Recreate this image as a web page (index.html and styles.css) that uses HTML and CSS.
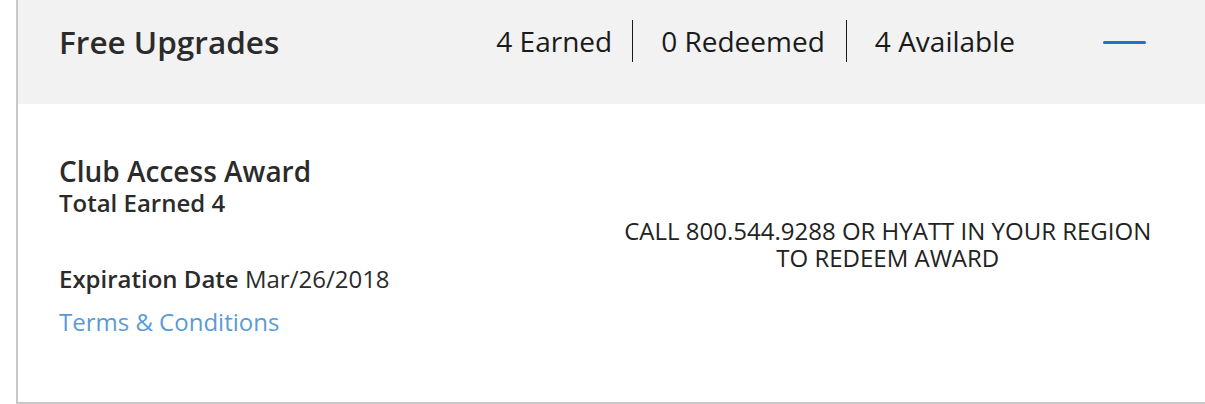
FILE: index.html
```html
<!DOCTYPE html>
<html lang="en">
<head>
    <meta charset="UTF-8">
    <meta name="viewport" content="width=device-width, initial-scale=1.0">
    <title>Free Upgrades</title>
    <link rel="stylesheet" href="styles.css">
</head>
<body>

    <!-- Блок бесплатных апгрейдов -->
    <div class="upgrades">
        <div class="upgrades-header">
            <h2 class="upgrades-title">Free Upgrades</h2>
            <div class="counts">
                <span class="count">4 Earned</span>
                <span class="count">0 Redeemed</span>
                <span class="count">4 Available</span>
            </div>
            <button class="toggle" aria-label="Collapse"></button>
        </div>

        <div class="upgrades-body">
            <div class="award">
                <div class="award-name">Club Access Award</div>
                <div class="award-total">Total Earned 4</div>
                <div class="award-expire"><b>Expiration Date</b> Mar/26/2018</div>
                <a class="award-terms" href="#">Terms &amp; Conditions</a>
            </div>
            <div class="redeem">
                <div>CALL 800.544.9288 OR HYATT IN YOUR REGION</div>
                <div>TO REDEEM AWARD</div>
            </div>
        </div>
    </div>

</body>
</html>
```

FILE: styles.css
```css
/* Базовые стили */
body {
    margin: 0;
    font-family: 'Open Sans', 'Noto Sans', sans-serif;
    background-color: #fff;
    color: #2b2b2b;
    overflow: hidden;
}

/* Панель */
.upgrades {
    margin-left: 16px;
    border-left: 2px solid #c8c8c8;
    border-bottom: 2px solid #c8c8c8;
}

/* Шапка */
.upgrades-header {
    display: flex;
    align-items: flex-start;
    height: 84px;
    padding: 20px 0 0 41px;
    background-color: #f2f2f2;
}

.upgrades-title {
    flex: 1;
    margin: 0;
    font-size: 31.5px;
    line-height: 44px;
    font-weight: 600;
    color: #2b2b2b;
}

.counts {
    display: flex;
}

.count {
    font-size: 28px;
    line-height: 42px;
    color: #1a1a1a;
    padding: 0 21px 0 28px;
    border-left: 1px solid #1a1a1a;
}

.count:first-child {
    padding-left: 0;
    padding-right: 20px;
    border-left: none;
}

.count:last-child {
    padding-right: 0;
}

/* Кнопка сворачивания */
.toggle {
    width: 43px;
    height: 3px;
    margin: 21px 59px 0 88px;
    padding: 0;
    border: none;
    border-radius: 2px;
    background-color: #1b75d0;
    cursor: pointer;
}

/* Содержимое */
.upgrades-body {
    display: flex;
    height: 298px;
    padding: 0 41px;
}

.award {
    flex: 1;
    padding-top: 51px;
}

.award-name {
    font-size: 28px;
    line-height: 32px;
    font-weight: 600;
}

.award-total {
    font-size: 24px;
    line-height: 31px;
    font-weight: 600;
}

.award-expire {
    margin-top: 46px;
    font-size: 24px;
    line-height: 30px;
}

.award-expire b {
    font-weight: 600;
}

.award-terms {
    display: inline-block;
    margin-top: 13px;
    font-size: 24px;
    line-height: 30px;
    color: #5b9bd5;
    text-decoration: none;
}

.redeem {
    flex: 1;
    padding-top: 113px;
    text-align: center;
    font-size: 24px;
    line-height: 27px;
    color: #222;
}
```
